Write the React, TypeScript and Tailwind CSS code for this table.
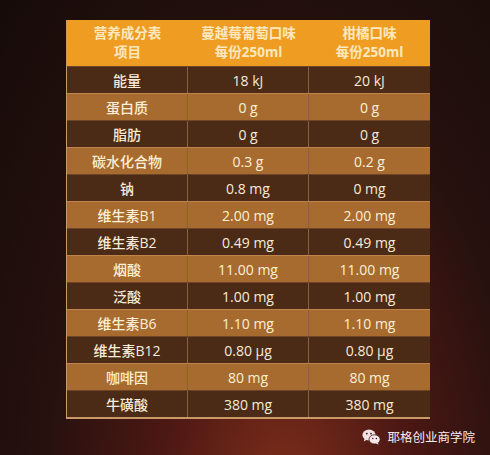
import React from 'react';

type Row = {
  name: string;
  a: string;
  b: string;
};

const rows: Row[] = [
  { name: '能量', a: '18 kJ', b: '20 kJ' },
  { name: '蛋白质', a: '0 g', b: '0 g' },
  { name: '脂肪', a: '0 g', b: '0 g' },
  { name: '碳水化合物', a: '0.3 g', b: '0.2 g' },
  { name: '钠', a: '0.8 mg', b: '0 mg' },
  { name: '维生素B1', a: '2.00 mg', b: '2.00 mg' },
  { name: '维生素B2', a: '0.49 mg', b: '0.49 mg' },
  { name: '烟酸', a: '11.00 mg', b: '11.00 mg' },
  { name: '泛酸', a: '1.00 mg', b: '1.00 mg' },
  { name: '维生素B6', a: '1.10 mg', b: '1.10 mg' },
  { name: '维生素B12', a: '0.80 μg', b: '0.80 μg' },
  { name: '咖啡因', a: '80 mg', b: '80 mg' },
  { name: '牛磺酸', a: '380 mg', b: '380 mg' },
];

function WeChatIcon() {
  return (
    <svg width="19" height="16" viewBox="0 0 19 16">
      <ellipse cx="7" cy="6" rx="6.6" ry="5.4" fill="#f3e2e4" />
      <path d="M2.6 9.6 L1.8 12.4 L5 10.8 Z" fill="#f3e2e4" />
      <circle cx="4.8" cy="4.6" r="0.9" fill="#3a1418" />
      <circle cx="9" cy="4.6" r="0.9" fill="#3a1418" />
      <ellipse cx="12.6" cy="10.4" rx="5.6" ry="4.6" fill="#f6e6e8" stroke="#3a1418" strokeWidth="0.8" />
      <path d="M15.6 13.8 L16.8 15.6 L13.6 14.6 Z" fill="#f6e6e8" />
      <circle cx="10.8" cy="9.4" r="0.75" fill="#3a1418" />
      <circle cx="14.4" cy="9.4" r="0.75" fill="#3a1418" />
    </svg>
  );
}

export default function App() {
  return (
    <div className="w-[490px] h-[455px] overflow-hidden bg-[radial-gradient(ellipse_at_58%_112%,#80301a_0%,#4e1814_30%,#26110e_60%,#160b09_100%)] font-['Open_Sans','Noto_Sans_CJK_SC',sans-serif]">
      <div className="pt-[20px] pl-[66px]">
        <div className="w-[364px] border-b-2 border-l border-[#c99a68]">
          {/* 表头 */}
          <div className="grid grid-cols-3 h-[46px] bg-[#ef9d22] text-[#fbe8bf] text-[13.5px] font-bold leading-[19px] text-center">
            <div className="flex flex-col items-center justify-center">
              <span>营养成分表</span>
              <span>项目</span>
            </div>
            <div className="flex flex-col items-center justify-center">
              <span>蔓越莓葡萄口味</span>
              <span>每份250ml</span>
            </div>
            <div className="flex flex-col items-center justify-center">
              <span>柑橘口味</span>
              <span>每份250ml</span>
            </div>
          </div>

          {rows.map((r, idx) => (
            <div
              key={r.name}
              className={
                idx % 2 === 0
                  ? 'grid grid-cols-3 h-[27px] border-t border-[#6e4526] bg-[#4b2b15] text-[#f7ead8] text-[14px] font-medium text-center'
                  : 'grid grid-cols-3 h-[27px] border-t border-[#c0844a] bg-[#a86b2f] text-[#fcefd6] text-[14px] font-medium text-center'
              }
            >
              <div className="flex items-center justify-center border-r border-[#8a6140]">{r.name}</div>
              <div className="flex items-center justify-center border-r border-[#8a6140]">{r.a}</div>
              <div className="flex items-center justify-center">{r.b}</div>
            </div>
          ))}
        </div>
      </div>

      {/* 水印 */}
      <div className="flex justify-end items-center gap-[6px] pr-[15px] mt-[9px] text-[12.5px] text-[#f4ecee] font-['Noto_Sans_CJK_SC',sans-serif]">
        <WeChatIcon />
        <span>耶格创业商学院</span>
      </div>
    </div>
  );
}
